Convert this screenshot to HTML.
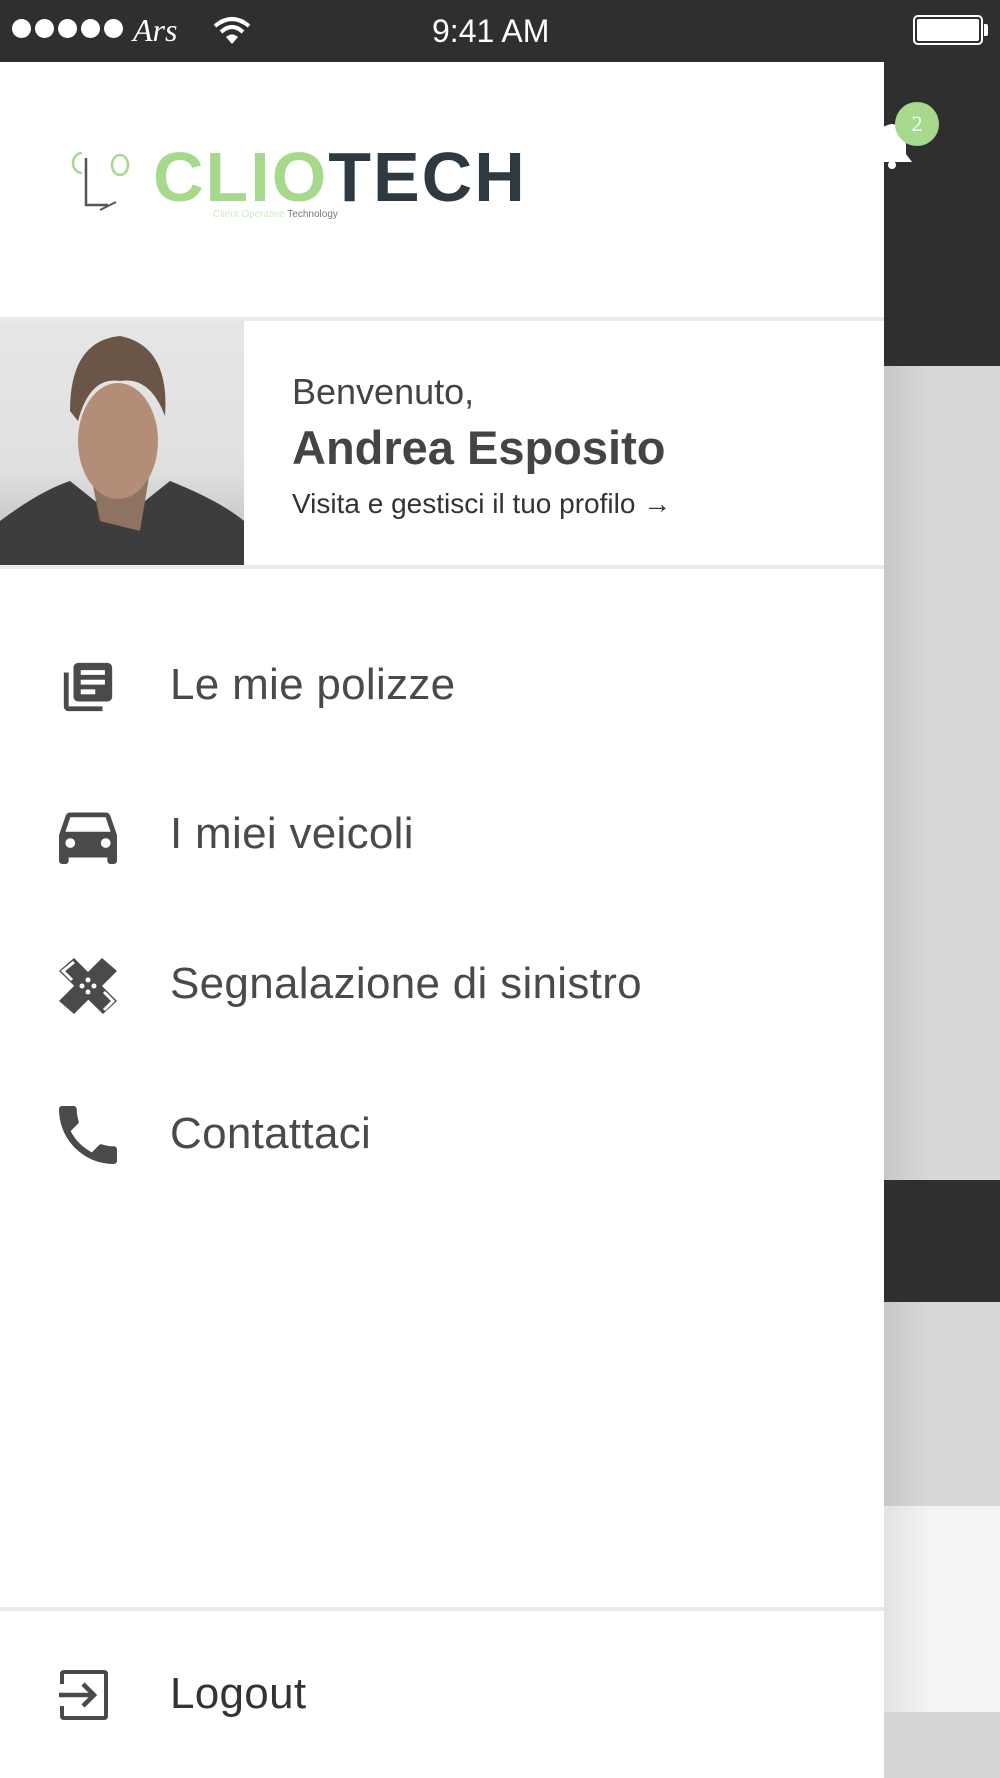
<!DOCTYPE html>
<html><head><meta charset="utf-8"><style>
*{margin:0;padding:0;box-sizing:border-box}
body{width:1000px;height:1778px;position:relative;overflow:hidden;background:#d6d6d6;font-family:"Liberation Sans",sans-serif}
.abs{position:absolute}
.menu{position:absolute;left:170px;font-size:44px;color:#4a4a4a;line-height:1;letter-spacing:0.3px}
.ic{position:absolute;left:59px}
</style></head><body>
<div class="abs" style="left:0;top:0;width:1000px;height:366px;background:#2f2f2f"></div>
<div class="abs" style="left:884px;top:366px;width:116px;height:814px;background:linear-gradient(90deg,#c8c8c8,#d8d8d8 40%)"></div>
<div class="abs" style="left:884px;top:1180px;width:116px;height:122px;background:#2f2f2f"></div>
<div class="abs" style="left:884px;top:1302px;width:116px;height:204px;background:linear-gradient(90deg,#c8c8c8,#d8d8d8 40%)"></div>
<div class="abs" style="left:884px;top:1506px;width:116px;height:206px;background:linear-gradient(90deg,#e2e2e2,#f4f4f4 40%)"></div>
<div class="abs" style="left:884px;top:1712px;width:116px;height:66px;background:#d4d4d4"></div>
<svg class="abs" style="left:870px;top:118px" width="44" height="52" viewBox="0 0 44 52"><path d="M2 44 L42 44 L36 36 L36 20 Q36 8 22 6 Q8 8 8 20 L8 36Z" fill="#fff"/><circle cx="22" cy="47" r="4" fill="#fff"/></svg>
<div class="abs" style="left:895px;top:102px;width:44px;height:44px;border-radius:50%;background:#a6d98c;color:#fff;font-size:22px;font-family:'Liberation Serif',serif;text-align:center;line-height:44px">2</div>
<div class="abs" style="left:12px;top:19px;display:flex;gap:4px">
<span style="width:19px;height:19px;border-radius:50%;background:#fff"></span><span style="width:19px;height:19px;border-radius:50%;background:#fff"></span><span style="width:19px;height:19px;border-radius:50%;background:#fff"></span><span style="width:19px;height:19px;border-radius:50%;background:#fff"></span><span style="width:19px;height:19px;border-radius:50%;background:#fff"></span></div>
<div class="abs" style="left:133px;top:12px;color:#fff;font-size:32px;font-style:italic;font-family:'Liberation Serif',serif">Ars</div>
<svg class="abs" style="left:212px;top:16px" width="40" height="30" viewBox="0 0 40 30"><path d="M20 28 L14 21 Q20 16 26 21Z" fill="#fff"/><path d="M9 16 Q20 6 31 16" stroke="#fff" stroke-width="4" fill="none"/><path d="M3 10 Q20 -4 37 10" stroke="#fff" stroke-width="4" fill="none"/></svg>
<div class="abs" style="left:432px;top:13px;color:#fff;font-size:32px">9:41 AM</div>
<div class="abs" style="left:913px;top:15px;width:70px;height:30px;border:2px solid #fff;border-radius:5px;padding:2px"><div style="width:100%;height:100%;background:#fff;border-radius:2px"></div></div>
<div class="abs" style="left:984px;top:24px;width:4px;height:12px;background:#fff;border-radius:0 2px 2px 0"></div>
<div class="abs" style="left:0;top:62px;width:884px;height:1716px;background:#fff"></div>
<svg class="abs" style="left:64px;top:150px" width="75" height="62" viewBox="0 0 75 62"><path d="M18 3 A9 10 0 0 0 18 23" stroke="#a6d98c" stroke-width="2.5" fill="none"/><path d="M22 8 L22 55 L44 55" stroke="#555" stroke-width="2.5" fill="none"/><path d="M36 60 L52 52" stroke="#555" stroke-width="2"/><ellipse cx="56" cy="15" rx="8" ry="10" stroke="#a6d98c" stroke-width="2.5" fill="none"/></svg>
<div class="abs" style="left:153px;top:137px;font-size:70px;font-weight:bold;letter-spacing:2px;line-height:80px;white-space:nowrap"><span style="color:#a6d98c">CLIO</span><span style="color:#2e3a42">TECH</span></div>
<div class="abs" style="left:213px;top:209px;font-size:10px;white-space:nowrap"><span style="color:#cfeac2">Client Operative </span><span style="color:#777">Technology</span></div>
<div class="abs" style="left:0;top:317px;width:884px;height:4px;background:#ebebeb"></div>
<div class="abs" style="left:0;top:321px;width:244px;height:244px;background:linear-gradient(180deg,#e6e6e6 0%,#e0e0e0 60%,#b9b9b9 100%)">
<svg width="244" height="244" viewBox="0 0 244 244"><path d="M0 244 L0 200 Q40 170 70 160 L120 200 L170 160 Q220 180 244 200 L244 244Z" fill="#3d3d3f"/><path d="M90 150 L100 200 L140 210 L150 150Z" fill="#8e7262"/><ellipse cx="118" cy="120" rx="40" ry="58" fill="#b48d78"/><path d="M70 90 Q70 20 120 15 Q170 25 165 95 Q150 55 120 60 Q90 55 78 100Z" fill="#6a5546"/></svg></div>
<div class="abs" style="left:292px;top:374px;font-size:36px;color:#444;line-height:1">Benvenuto,</div>
<div class="abs" style="left:292px;top:424px;font-size:47px;font-weight:bold;color:#444;line-height:1">Andrea Esposito</div>
<div class="abs" style="left:292px;top:490px;font-size:28px;color:#333;line-height:1">Visita e gestisci il tuo profilo &#8594;</div>
<div class="abs" style="left:0;top:565px;width:884px;height:4px;background:#ebebeb"></div>
<svg class="ic" style="top:658px" width="58" height="58" viewBox="0 0 24 24"><path d="M4 6H2v14c0 1.1.9 2 2 2h14v-2H4V6zm16-4H8c-1.1 0-2 .9-2 2v12c0 1.1.9 2 2 2h12c1.1 0 2-.9 2-2V4c0-1.1-.9-2-2-2zm-1 9H9V9h10v2zm-4 4H9v-2h6v2zm4-8H9V5h10v2z" fill="#4a4a4a"/></svg>
<div class="menu" style="top:663px">Le mie polizze</div>
<svg class="ic" style="top:806px" width="58" height="58" viewBox="3 3 18 18"><path d="M18.92 6.01C18.72 5.42 18.160 5 17.5 5h-11c-.66 0-1.21.42-1.42 1.01L3 12v8c0 .55.45 1 1 1h1c.55 0 1-.45 1-1v-1h12v1c0 .55.45 1 1 1h1c.55 0 1-.45 1-1v-8l-2.08-5.99zM6.5 16c-.83 0-1.5-.67-1.5-1.5S5.67 13 6.5 13s1.5.67 1.5 1.5S7.33 16 6.5 16zm11 0c-.83 0-1.5-.67-1.5-1.5s.67-1.5 1.5-1.5 1.5.67 1.5 1.5-.67 1.5-1.5 1.5zM5 11l1.5-4.5h11L19 11H5z" fill="#4a4a4a"/></svg>
<div class="menu" style="top:812px">I miei veicoli</div>
<svg class="ic" style="top:958px" width="58" height="56" viewBox="0 0 58 56"><path d="M15 0 L58 43 L44 56 L0 13Z" fill="#4a4a4a"/><path d="M43 0 L58 13 L15 56 L0 43Z" fill="#4a4a4a"/><path d="M15 4 L4 13 L13 22 M45 52 L54 43 L45 34" stroke="#fff" stroke-width="3" fill="none"/><circle cx="29" cy="22" r="2.5" fill="#fff"/><circle cx="23" cy="28" r="2.5" fill="#fff"/><circle cx="35" cy="28" r="2.5" fill="#fff"/><circle cx="29" cy="34" r="2.5" fill="#fff"/></svg>
<div class="menu" style="top:962px">Segnalazione di sinistro</div>
<svg class="ic" style="top:1106px" width="58" height="58" viewBox="3 3 18 18"><path d="M6.62 10.79c1.44 2.83 3.76 5.14 6.59 6.59l2.2-2.2c.27-.27.67-.36 1.020-.24 1.12.37 2.33.57 3.57.57.55 0 1 .45 1 1V20c0 .55-.45 1-1 1-9.39 0-17-7.61-17-17 0-.55.45-1 1-1h3.5c.55 0 1 .45 1 1 0 1.25.2 2.45.57 3.57.11.35.03.74-.25 1.02l-2.2 2.2z" fill="#4a4a4a"/></svg>
<div class="menu" style="top:1112px">Contattaci</div>
<div class="abs" style="left:0;top:1607px;width:884px;height:4px;background:#ebebeb"></div>
<svg class="ic" style="top:1670px" width="50" height="50" viewBox="0 0 50 50"><path d="M3 14 V4 Q3 2 5 2 H45 Q47 2 47 4 V46 Q47 48 45 48 H5 Q3 48 3 46 V36" stroke="#4a4a4a" stroke-width="4" fill="none"/><path d="M0 25 H34 M24 14 L35 25 L24 36" stroke="#4a4a4a" stroke-width="4.5" fill="none"/></svg>
<div class="menu" style="top:1672px;color:#333">Logout</div>
</body></html>
